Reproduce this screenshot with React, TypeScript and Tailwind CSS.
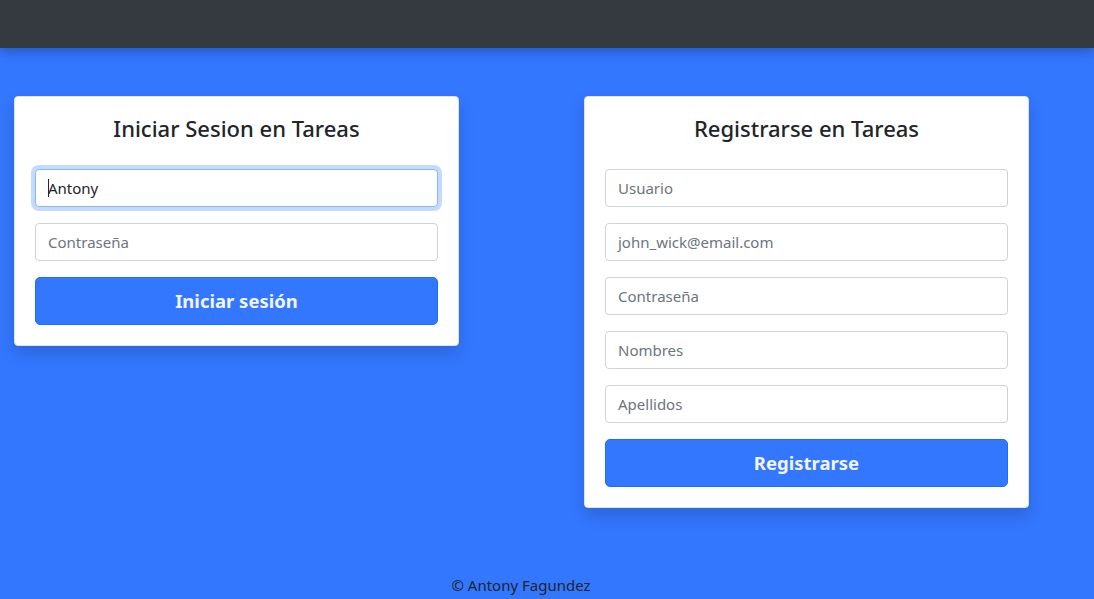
import React from "react";

const font = { fontFamily: '"Noto Sans", "Open Sans", sans-serif' };

function Field({ placeholder, value, focused }: { placeholder: string; value?: string; focused?: boolean }) {
  return (
    <div
      className={
        "h-[38px] w-full rounded-[4px] border bg-white px-3 flex items-center text-[15px] " +
        (focused
          ? "border-[#86b7fe] shadow-[0_0_0_4px_rgba(13,110,253,0.25)]"
          : "border-[#ced4da]")
      }
    >
      {value ? (
        <span className="text-[#212529] flex items-center">
          <span className="inline-block w-px h-[18px] bg-[#212529] mr-[-1px]" />
          {value}
        </span>
      ) : (
        <span className="text-[#6c757d]">{placeholder}</span>
      )}
    </div>
  );
}

function Card({ title, children, button }: { title: string; children: React.ReactNode; button: string }) {
  return (
    <div className="w-[445px] rounded-[4px] border border-[#dfe3e8] bg-white px-5 pt-[17px] pb-5 shadow-[0_8px_16px_rgba(0,0,0,0.15)]">
      <h2 className="text-center text-[22px] leading-[29px] font-medium text-[#212529] mb-[26px]">{title}</h2>
      <div className="flex flex-col gap-4">
        {children}
        <div className="h-[48px] w-full rounded-[5px] bg-[#3377ff] border border-[#1a6dff] flex items-center justify-center text-[18.5px] font-bold text-[#f2f5ff]">
          {button}
        </div>
      </div>
    </div>
  );
}

export default function App() {
  return (
    <div className="w-[1094px] h-[599px] overflow-hidden bg-[#3377ff] flex flex-col" style={font}>
      <div className="h-[48px] w-full bg-[#343a40] shadow-[0_4px_10px_rgba(0,0,0,0.25)] shrink-0" />
      <div className="flex items-start pt-[48px]">
        <div className="w-[547px] pl-[14px]">
          <Card title="Iniciar Sesion en Tareas" button="Iniciar sesión">
            <Field placeholder="Usuario" value="Antony" focused />
            <Field placeholder="Contraseña" />
          </Card>
        </div>
        <div className="w-[547px] pl-[37px]">
          <Card title="Registrarse en Tareas" button="Registrarse">
            <Field placeholder="Usuario" />
            <Field placeholder="john_wick@email.com" />
            <Field placeholder="Contraseña" />
            <Field placeholder="Nombres" />
            <Field placeholder="Apellidos" />
          </Card>
        </div>
      </div>
      <div className="flex-1" />
      <div className="flex justify-center pr-[52px] pb-[4px] text-[15px] leading-[20px] text-[#212529]">
        © Antony Fagundez
      </div>
    </div>
  );
}
